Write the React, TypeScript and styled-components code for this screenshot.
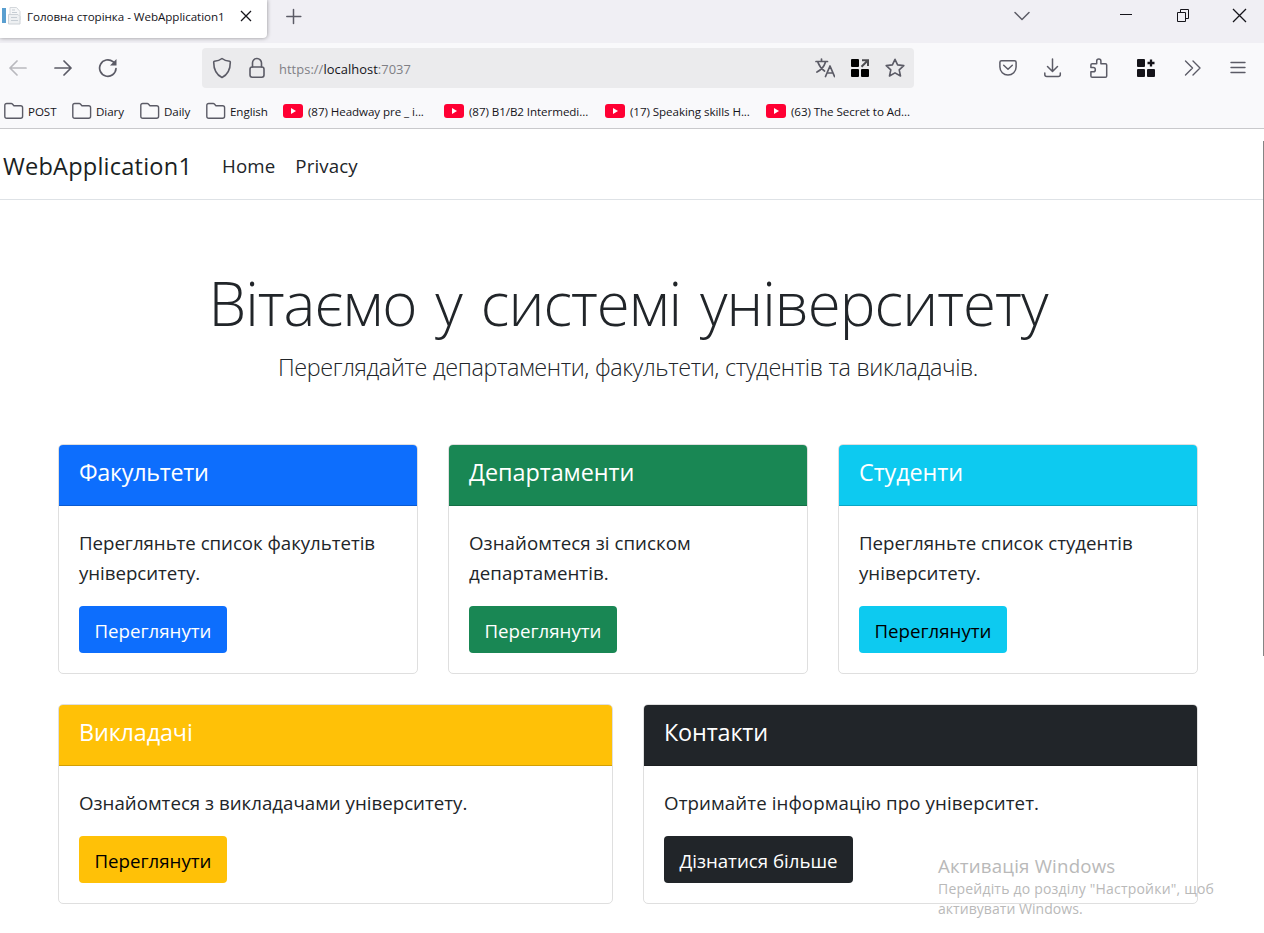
import React from 'react';
import styled, { createGlobalStyle } from 'styled-components';

const GlobalStyle = createGlobalStyle`
  * { box-sizing: border-box; }
  body {
    margin: 0;
    background: #fff;
    color: #212529;
    font-family: "Open Sans", "Noto Sans", sans-serif;
    overflow: hidden;
  }
  svg { display: block; flex: none; }
  h1, h4, p { margin: 0; font-weight: 400; }
`;

const Window = styled.div`
  position: relative;
  width: 1264px;
  height: 933px;
  overflow: hidden;
`;

const TabBar = styled.div`
  display: flex;
  height: 43px;
  background: #f0eff4;
`;

const Tab = styled.div`
  display: flex;
  align-items: center;
  width: 267px;
  height: 38px;
  padding: 0 15px 6px 2px;
  background: #fff;
  border-radius: 0 0 4px 0;
  box-shadow: 0 0 4px rgba(0, 0, 0, 0.4);
`;

const TabTitle = styled.span`
  flex: 1;
  margin-left: 6px;
  font-size: 11.6px;
  letter-spacing: -0.04px;
  color: #15141a;
  white-space: nowrap;
`;

const TabActions = styled.div`
  flex: 1;
  display: flex;
  justify-content: space-between;
  padding: 8px 17px 0 19px;
`;

const WindowButtons = styled.div`
  display: grid;
  grid-template-columns: 106px 57px 55px 15px;
`;

const Toolbar = styled.div`
  display: flex;
  align-items: center;
  height: 50px;
  padding: 0 18px 0 9px;
  background: #f9f9fb;
`;

const NavButtons = styled.div`
  display: grid;
  grid-template-columns: 45px 44px 20px;
  width: 193px;
`;

const AddressBar = styled.div`
  display: flex;
  align-items: center;
  width: 712px;
  height: 40px;
  padding: 0 9px 0 10px;
  border-radius: 4px;
  background: #ebebed;
`;

const Address = styled.div`
  flex: 1;
  margin-left: 14px;
  padding-top: 2px;
  font-size: 12.9px;
  letter-spacing: 0.05px;
  color: #808085;
  b { font-weight: 400; color: #15141a; }
`;

const IconGroup = styled.div<{ $gap: number }>`
  display: flex;
  align-items: center;
  gap: ${(p) => p.$gap}px;
`;

const ToolbarButtons = styled.div`
  display: grid;
  grid-template-columns: 45px 46px 47px 47px 46px 16px;
  align-items: center;
  margin-left: auto;
`;

const Bookmarks = styled.div`
  display: flex;
  align-items: center;
  height: 36px;
  padding: 1px 0 0 4px;
  background: #f9f9fb;
  border-bottom: 1px solid #c9c9cc;
`;

const Bookmark = styled.div<{ $width: number; $gap: number }>`
  display: flex;
  align-items: center;
  gap: ${(p) => p.$gap}px;
  width: ${(p) => p.$width}px;
  font-size: 11.6px;
  letter-spacing: -0.07px;
  color: #15141a;
  white-space: nowrap;
`;

const SiteNav = styled.nav`
  display: flex;
  align-items: center;
  height: 71px;
  padding: 4px 0 0 3px;
  border-bottom: 1px solid #dee2e6;
`;

const Brand = styled.a`
  width: 219px;
  font-size: 23.6px;
  letter-spacing: 0.2px;
  color: #1b1f23;
`;

const NavLink = styled.a`
  margin-right: 20px;
  padding-bottom: 2px;
  font-size: 18.7px;
  letter-spacing: 0.12px;
`;

const Main = styled.main`
  display: flex;
  flex-direction: column;
  padding: 64px 66px 0 58px;
`;

const Hero = styled.header`
  display: flex;
  flex-direction: column;
  align-items: center;
  height: 180px;
  white-space: nowrap;
`;

const HeroTitle = styled.h1`
  font-size: 60px;
  font-weight: 300;
  line-height: 78px;
  letter-spacing: -0.95px;
  word-spacing: 4.3px;
`;

const HeroText = styled.p`
  font-size: 23.4px;
  font-weight: 300;
  line-height: 38px;
  letter-spacing: -0.4px;
  word-spacing: 0.3px;
  margin-top: 6px;
`;

const CardRow = styled.section`
  display: flex;
  gap: 30px;
  margin-bottom: 30px;
`;

const Card = styled.article<{ $height: number }>`
  flex: 1;
  height: ${(p) => p.$height}px;
  border: 1px solid #dfdfdf;
  border-radius: 5px;
  overflow: hidden;
`;

const CardHeader = styled.h4<{ $color: string; $spacing: number }>`
  height: 61px;
  padding: 9px 20px;
  background: ${(p) => p.$color};
  border-bottom: 1px solid rgba(0, 0, 0, 0.175);
  color: #fff;
  font-size: 23.4px;
  line-height: 36px;
  letter-spacing: ${(p) => p.$spacing}px;
`;

const CardBody = styled.div`
  padding: 22px 20px;
`;

const CardText = styled.p<{ $spacing: number }>`
  margin-bottom: 18px;
  font-size: 18.7px;
  line-height: 30px;
  letter-spacing: ${(p) => p.$spacing}px;
  white-space: pre-line;
`;

const CardButton = styled.a<{ $color: string; $ink: string; $width: number }>`
  display: flex;
  justify-content: center;
  width: ${(p) => p.$width}px;
  height: 47px;
  border-radius: 4px;
  background: ${(p) => p.$color};
  color: ${(p) => p.$ink};
  font-size: 18.7px;
  line-height: 49px;
  white-space: nowrap;
`;

const ScrollThumb = styled.div`
  position: absolute;
  top: 141px;
  right: 0;
  width: 1px;
  height: 515px;
  background: #858585;
`;

const Watermark = styled.div`
  position: absolute;
  left: 938px;
  top: 853px;
  color: #b9b9b9;
  white-space: nowrap;
`;

const WatermarkTitle = styled.div`
  font-size: 18.7px;
  line-height: 26px;
  letter-spacing: 0.18px;
`;

const WatermarkLine = styled.div<{ $spacing: number }>`
  font-size: 14px;
  line-height: 20px;
  letter-spacing: ${(p) => p.$spacing}px;
`;

const stroke = { fill: 'none', stroke: '#5b5b66', strokeWidth: 1.5, strokeLinecap: 'round', strokeLinejoin: 'round' } as const;

const PageIcon = () => (
  <svg width="19" height="20" viewBox="0 0 19 20">
    <rect x="0" y="2" width="4" height="15" fill="#5a9fd0" />
    <path d="M8 1.500h6.500l3.500 4V14H8z" fill="#f6f7f8" stroke="#d3d7db" />
    <path d="M6.500 8.500H16l2 2V18H6.500z" fill="#eef0f2" stroke="#cdd2d7" />
    <path d="M10 4h3M10 6.500h5M9 11.500h6M9 14.500h7" fill="none" stroke="#c6cdd4" />
  </svg>
);
const CloseIcon = ({ size, color }: { size: number; color: string }) => (
  <svg width={size} height={size} viewBox={`0 0 ${size} ${size}`}>
    <path d={`M1 1L${size - 1} ${size - 1}M${size - 1} 1L1 ${size - 1}`} stroke={color} strokeWidth="1.3" />
  </svg>
);
const PlusIcon = () => (
  <svg width="16" height="17" viewBox="0 0 16 17"><path d="M7.500 1.500v14M.8 8.500h14" {...stroke} /></svg>
);
const ChevronIcon = () => (
  <svg width="16" height="16" viewBox="0 0 16 16"><path d="M1 4.500l7 7 7-7" {...stroke} /></svg>
);
const MinimizeIcon = () => (
  <svg width="12" height="16" viewBox="0 0 12 16"><path d="M0 6.500h12" stroke="#15141a" /></svg>
);
const RestoreIcon = () => (
  <svg width="13" height="16" viewBox="0 0 13 16">
    <path d="M.5 4.500h8v9h-8zM3.500 4.500v-3h8v9h-3" fill="none" stroke="#15141a" />
  </svg>
);
const ArrowIcon = ({ back }: { back?: boolean }) => (
  <svg width="18" height="20" viewBox="0 -1 18 20">
    <path d={back ? 'M17 9H1M8 2L1 9l7 7' : 'M1 9h16M10 2l7 7-7 7'} {...stroke} stroke={back ? '#b9b9be' : '#5b5b66'} strokeWidth={1.7} />
  </svg>
);
const ReloadIcon = () => (
  <svg width="20" height="20" viewBox="0 0 20 20">
    <path d="M18 10.500a8.200 8.200 0 1 1-3-6.800l2 2" {...stroke} strokeWidth={1.7} />
    <path d="M18.500 1v6.500H12z" fill="#5b5b66" />
  </svg>
);
const ShieldIcon = () => (
  <svg width="20" height="22" viewBox="0 0 20 22">
    <path d="M10 1.500c1.600 1.300 4.800 2.500 7.600 2.800q.7.100.7.900c0 7-2.300 12.300-8.300 15.300C4 17.500 1.700 12.200 1.700 5.200q0-.8.7-.9c2.800-.3 6-1.500 7.600-2.800z" {...stroke} strokeWidth={1.6} />
  </svg>
);
const LockIcon = () => (
  <svg width="16" height="22" viewBox="0 0 16 22">
    <rect x="1" y="10" width="14" height="10.3" rx="2.2" {...stroke} strokeWidth={1.6} />
    <path d="M3.500 10V6a4.500 4.500 0 0 1 9 0v4" {...stroke} strokeWidth={1.6} />
  </svg>
);
const TranslateIcon = () => (
  <svg width="20" height="20" viewBox="0 0 20 20">
    <path d="M1 3.500h11.500M6.500 1v2.500M10.500 4C9 9 6 12 2 14M3 4.500c1.500 4 3.500 6.500 6.500 8.500M10.500 18.500L15 8l4.500 10.500M12 15h6" {...stroke} strokeWidth={1.7} />
  </svg>
);
const TilesIcon = ({ plus }: { plus?: boolean }) => (
  <svg width="18" height="18" viewBox="0 0 18 18">
    <g fill={plus ? '#15141a' : '#000'}>
      <rect width="8" height="8" rx="1" />
      <rect y="10" width="8" height="8" rx="1" />
      <rect x="10" y="10" width="8" height="8" rx="1" />
    </g>
    {plus
      ? <path d="M14 .5v7M10.500 4h7" stroke="#15141a" strokeWidth="2.3" />
      : <path d="M11 1.200h6V7M16.500 1.700L10.500 7.700" fill="none" stroke="#4c4c50" strokeWidth="2" />}
  </svg>
);
const StarIcon = () => (
  <svg width="20" height="20" viewBox="0 0 20 20">
    <path d="M10 1.300l2.600 5.600 6.200.7-4.600 4.200 1.300 6.200L10 14.900 4.500 18l1.300-6.200L1.200 7.600l6.200-.7z" {...stroke} strokeWidth={1.6} />
  </svg>
);
const PocketIcon = () => (
  <svg width="18" height="18" viewBox="0 0 18 18">
    <path d="M2.500 1.700h13q1.600 0 1.600 1.600V8a8.100 8.100 0 0 1-16.200 0V3.300q0-1.600 1.600-1.600zM4.700 6.300L9 10.300l4.300-4" {...stroke} />
  </svg>
);
const DownloadIcon = () => (
  <svg width="18" height="20" viewBox="0 0 18 20">
    <path d="M8.500 1v12M3.500 8.500l5 5 5-5M.8 15v1.500q0 2 2 2h11.500q2 0 2-2V15" {...stroke} />
  </svg>
);
const PuzzleIcon = () => (
  <svg width="18" height="20" viewBox="0 0 18 20">
    <path d="M2.200 19.200q-1.300 0-1.300-1.300v-4.100h2.300a2 2 0 0 0 0-4.300H.9V7q0-1.300 1.300-1.300h4.500V3.200a2.100 2.100 0 0 1 4.200 0v2.500h4.500q1.300 0 1.300 1.300v10.900q0 1.300-1.300 1.300z" {...stroke} />
  </svg>
);
const OverflowIcon = () => (
  <svg width="18" height="18" viewBox="0 0 18 18"><path d="M1.500 2l7 7-7 7M9 2l7 7-7 7" {...stroke} strokeWidth={1.4} /></svg>
);
const MenuIcon = () => (
  <svg width="16" height="16" viewBox="0 0 16 16"><path d="M1 2.500h14M1 7.500h14M1 12.500h14" {...stroke} strokeWidth={1.4} /></svg>
);
const FolderIcon = () => (
  <svg width="20" height="18" viewBox="0 0 20 18">
    <path d="M2.800 1.500h4.400q.7 0 1.200.5l1.500 1.700h6.700q2 0 2 2v8.500q0 2-2 2H2.800q-2 0-2-2V3.500q0-2 2-2z" {...stroke} strokeWidth={1.4} />
  </svg>
);
const VideoIcon = () => (
  <svg width="20" height="14" viewBox="0 0 20 14">
    <rect width="20" height="14" rx="3" fill="#ff0033" />
    <path d="M8 4l5 3-5 3z" fill="#fff" />
  </svg>
);

const bookmarks = [
  { text: 'POST', width: 68 },
  { text: 'Diary', width: 68 },
  { text: 'Daily', width: 66 },
  { text: 'English', width: 77 },
  { text: '(87) Headway pre _ i...', width: 161, video: true },
  { text: '(87) B1/B2 Intermedi...', width: 161, video: true },
  { text: '(17) Speaking skills H...', width: 161, video: true },
  { text: '(63) The Secret to Ad...', width: 161, video: true },
];

type CardData = {
  title: string;
  text: string;
  color: string;
  ink?: string;
  button?: string;
  buttonWidth?: number;
  titleSpacing?: number;
  textSpacing?: number;
};

const rows: { height: number; cards: CardData[] }[] = [
  {
    height: 230,
    cards: [
      { title: 'Факультети', text: 'Перегляньте список факультетів\nуніверситету.', color: '#0d6efd', titleSpacing: -0.3, textSpacing: -0.04 },
      { title: 'Департаменти', text: 'Ознайомтеся зі списком\nдепартаментів.', color: '#198754', titleSpacing: -0.05, textSpacing: 0.05 },
      { title: 'Студенти', text: 'Перегляньте список студентів\nуніверситету.', color: '#0dcaf0', ink: '#000', titleSpacing: -0.1 },
    ],
  },
  {
    height: 200,
    cards: [
      { title: 'Викладачі', text: 'Ознайомтеся з викладачами університету.', color: '#ffc107', ink: '#000', titleSpacing: -0.15 },
      { title: 'Контакти', text: 'Отримайте інформацію про університет.', color: '#212529', button: 'Дізнатися більше', buttonWidth: 189, titleSpacing: -0.15, textSpacing: 0.09 },
    ],
  },
];

export default function App() {
  return (
    <Window>
      <GlobalStyle />
      <TabBar>
        <Tab>
          <PageIcon />
          <TabTitle>Головна сторінка - WebApplication1</TabTitle>
          <CloseIcon size={12} color="#15141a" />
        </Tab>
        <TabActions>
          <PlusIcon />
          <WindowButtons>
            <ChevronIcon />
            <MinimizeIcon />
            <RestoreIcon />
            <CloseIcon size={15} color="#15141a" />
          </WindowButtons>
        </TabActions>
      </TabBar>
      <Toolbar>
        <NavButtons>
          <ArrowIcon back />
          <ArrowIcon />
          <ReloadIcon />
        </NavButtons>
        <AddressBar>
          <IconGroup $gap={17}>
            <ShieldIcon />
            <LockIcon />
          </IconGroup>
          <Address>https://<b>localhost</b>:7037</Address>
          <IconGroup $gap={16}>
            <TranslateIcon />
            <TilesIcon />
            <StarIcon />
          </IconGroup>
        </AddressBar>
        <ToolbarButtons>
          <PocketIcon />
          <DownloadIcon />
          <PuzzleIcon />
          <TilesIcon plus />
          <OverflowIcon />
          <MenuIcon />
        </ToolbarButtons>
      </Toolbar>
      <Bookmarks>
        {bookmarks.map((b) => (
          <Bookmark key={b.text} $width={b.width} $gap={b.video ? 5 : 4}>
            {b.video ? <VideoIcon /> : <FolderIcon />}
            {b.text}
          </Bookmark>
        ))}
      </Bookmarks>
      <SiteNav>
        <Brand>WebApplication1</Brand>
        <NavLink>Home</NavLink>
        <NavLink>Privacy</NavLink>
      </SiteNav>
      <Main>
        <Hero>
          <HeroTitle>Вітаємо у системі університету</HeroTitle>
          <HeroText>Переглядайте департаменти, факультети, студентів та викладачів.</HeroText>
        </Hero>
        {rows.map((row) => (
          <CardRow key={row.height}>
            {row.cards.map((c) => (
              <Card key={c.title} $height={row.height}>
                <CardHeader $color={c.color} $spacing={c.titleSpacing ?? 0}>{c.title}</CardHeader>
                <CardBody>
                  <CardText $spacing={c.textSpacing ?? 0}>{c.text}</CardText>
                  <CardButton $color={c.color} $ink={c.ink ?? '#fff'} $width={c.buttonWidth ?? 148}>
                    {c.button ?? 'Переглянути'}
                  </CardButton>
                </CardBody>
              </Card>
            ))}
          </CardRow>
        ))}
      </Main>
      <ScrollThumb />
      <Watermark>
        <WatermarkTitle>Активація Windows</WatermarkTitle>
        <WatermarkLine $spacing={0.2}>Перейдіть до розділу "Настройки", щоб</WatermarkLine>
        <WatermarkLine $spacing={0.05}>активувати Windows.</WatermarkLine>
      </Watermark>
    </Window>
  );
}
